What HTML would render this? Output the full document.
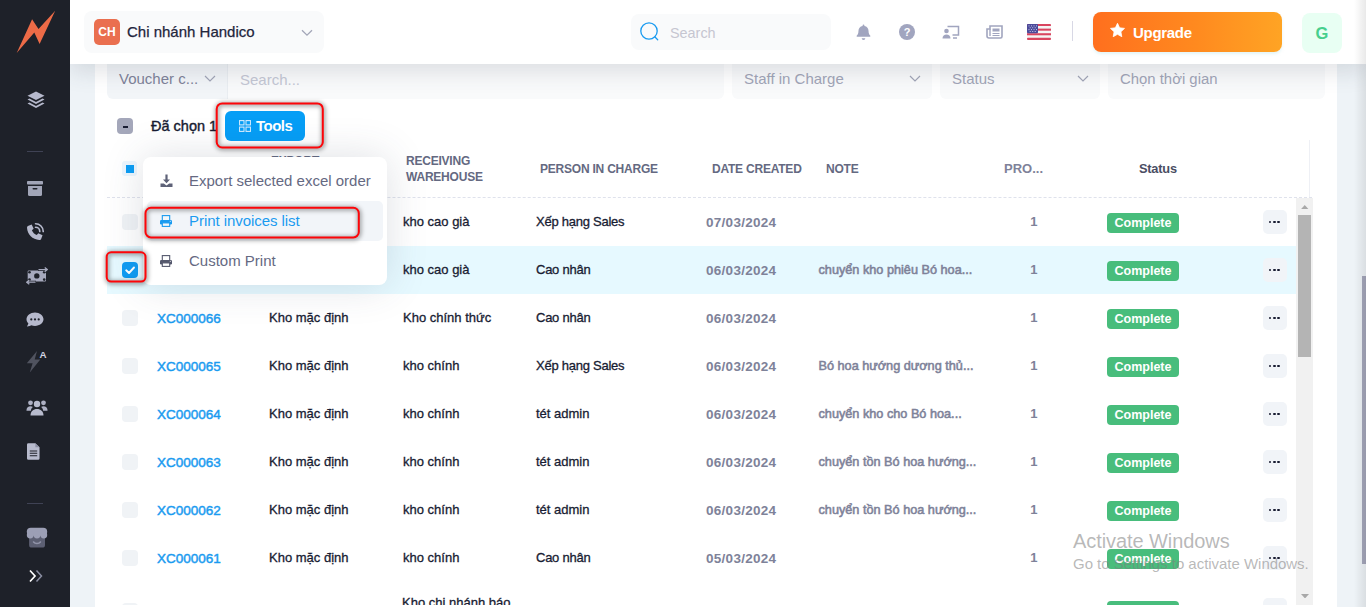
<!DOCTYPE html>
<html lang="vi">
<head>
<meta charset="utf-8">
<title>Export Warehouse</title>
<style>
*{box-sizing:border-box;margin:0;padding:0}
html,body{width:1366px;height:607px;overflow:hidden;background:#eef3f7;font-family:"Liberation Sans",sans-serif;color:#181c32}
.abs{position:absolute}
#side{position:absolute;left:0;top:0;width:70px;height:607px;background:#1e2129;z-index:30}
#side svg{position:absolute}
#side .dv{position:absolute;left:27px;width:16px;height:1px;background:#3f4254}
#hdr{position:absolute;left:70px;top:0;width:1296px;height:64px;background:#fff;box-shadow:0 8px 22px rgba(60,65,85,.15);z-index:20}
#card{position:absolute;left:95px;top:0;width:1242px;height:607px;background:#fff}
.t{position:absolute;white-space:nowrap;line-height:1}

#pg{position:absolute;left:-95px;top:0;width:1366px;height:607px}
.fl{position:absolute;top:54px;height:44.500px;background:#f9fafb;border-radius:0 0 6px 6px}
.ft{position:absolute;white-space:nowrap;line-height:1;font-size:15px;top:71px;color:#a1a5b7}
.th{position:absolute;white-space:nowrap;font-size:12px;font-weight:700;color:#646981;line-height:16px;letter-spacing:-.22px}
.row{position:absolute;left:107px;width:1189px;height:48px}
.row .cb{position:absolute;left:15px;top:16px;width:16px;height:16px;border-radius:4px;background:#f0f3f6}
.row .c{position:absolute;white-space:nowrap;line-height:1;top:17px;font-size:13px}
.row .code{left:50px;color:#1a9bf0;font-weight:500;font-size:13.5px;top:18px;-webkit-text-stroke:.45px #1a9bf0}
.row .k{color:#181c32;font-weight:500;-webkit-text-stroke:.3px #181c32}
.row .g{color:#7e8299;font-weight:700}
.row .n{color:#7e8299;font-weight:400;font-size:12.700px;-webkit-text-stroke:.55px #7e8299;left:711.500px;top:18px}
.row .p{letter-spacing:-.25px}
.row .d{left:599px;font-size:13.500px;top:18px;letter-spacing:.28px}
.row .bd{position:absolute;left:1000px;top:15px;width:72px;height:20px;border-radius:4px;background:#48bd7c;color:#fff;font-size:12.500px;font-weight:700;text-align:center;line-height:20px}
.row .mb{position:absolute;left:1156px;top:12px;width:24px;height:24px;border-radius:5px;background:#f1f4f8}
.row .mb i{position:absolute;top:10.700px;width:2.600px;height:2.600px;border-radius:50%;background:#181c32}
.rb{border:2px solid #fb0a0e;border-radius:5px;z-index:15;box-shadow:1px 1px 5px rgba(0,0,0,.36),inset 1px 1px 5px rgba(0,0,0,.28)}
/* SECTION-CSS */
</style>
</head>
<body>
<div id="card">
<div id="pg">
<div class="fl" style="left:107px;width:121px;background:#f2f5f8;border-radius:0 0 0 6px;border-right:1px solid #e9edf1"></div>
<div class="fl" style="left:228px;width:496px;border-radius:0 0 6px 0"></div>
<div class="fl" style="left:732px;width:200px"></div>
<div class="fl" style="left:940px;width:160px"></div>
<div class="fl" style="left:1108px;width:217px"></div>
<div class="ft" style="left:119px;color:#7e8299">Voucher c...</div>
<svg class="abs" style="left:204px;top:75px" width="12" height="8" viewBox="0 0 12 8"><path d="M1 1 L6 6 L11 1" fill="none" stroke="#a1a5b7" stroke-width="1.200"/></svg>
<div class="ft" style="left:240px;top:72px;color:#c4c7d4">Search...</div>
<div class="ft" style="left:744px">Staff in Charge</div>
<svg class="abs" style="left:909px;top:75px" width="12" height="8" viewBox="0 0 12 8"><path d="M1 1 L6 6 L11 1" fill="none" stroke="#a1a5b7" stroke-width="1.200"/></svg>
<div class="ft" style="left:952px">Status</div>
<svg class="abs" style="left:1077px;top:75px" width="12" height="8" viewBox="0 0 12 8"><path d="M1 1 L6 6 L11 1" fill="none" stroke="#a1a5b7" stroke-width="1.200"/></svg>
<div class="ft" style="left:1120px;top:72px;font-size:14.900px">Chọn thời gian</div>

<div class="abs" style="left:117px;top:118px;width:16px;height:16px;border-radius:4px;background:#a4a7ba"></div><div class="abs" style="left:122.500px;top:126px;width:5px;height:1.500px;background:#181c32"></div>
<div class="t" style="left:151px;top:118.500px;font-size:14.500px;font-weight:500;color:#181c32;-webkit-text-stroke:.4px #181c32">Đã chọn 1</div>
<div class="abs" style="left:225px;top:111px;width:80px;height:30px;border-radius:6px;background:#069ef6"></div>
<svg class="abs" style="left:239px;top:120px" width="12" height="12" viewBox="0 0 13 12" preserveAspectRatio="none"><g fill="none" stroke="#d5ecfd" stroke-width="1.100"><rect x=".6" y=".6" width="4.800" height="4.300"/><rect x="7.600" y=".6" width="4.800" height="4.300"/><rect x=".6" y="7.100" width="4.800" height="4.300"/><rect x="7.600" y="7.100" width="4.800" height="4.300"/></g></svg>
<div class="t" style="left:256px;top:118px;font-size:15px;font-weight:700;color:#fff;letter-spacing:-.5px">Tools</div>

<div class="abs" style="left:122px;top:161px;width:15px;height:15px;border-radius:3px;background:#ecf6fe"></div>
<div class="abs" style="left:126px;top:165px;width:8px;height:8px;background:#0c9df4"></div>
<div class="th" style="left:271px;top:153px">EXPORT<br>WAREHOUSE</div>
<div class="th" style="left:406px;top:152.500px">RECEIVING<br>WAREHOUSE</div>
<div class="th" style="left:540px;top:160.500px">PERSON IN CHARGE</div>
<div class="th" style="left:712px;top:160.500px">DATE CREATED</div>
<div class="th" style="left:826px;top:160.500px">NOTE</div>
<div class="th" style="left:1004px;top:160.500px;font-size:13px;color:#7e8299;font-weight:700;letter-spacing:0">PRO...</div>
<div class="th" style="left:1139px;top:160.500px;color:#4a4d63;font-size:12.800px">Status</div>
<div class="abs" style="left:1308.500px;top:140px;width:1px;height:58px;background:#eef0f5"></div>
<div class="abs" style="left:107px;top:197px;width:1205px;height:0;border-top:1px dashed #dfe2ec"></div>
<div class="row" style="top:198px"><div class="cb"></div><div class="c code">XC000068</div><div class="c k" style="left:162px">Kho mặc định</div><div class="c k" style="left:296px">kho cao già</div><div class="c k p" style="left:429px">Xếp hạng Sales</div><div class="c g d">07/03/2024</div><div class="c g" style="left:923.200px;font-size:13px">1</div><div class="bd">Complete</div><div class="mb"><i style="left:5.800px"></i><i style="left:10px"></i><i style="left:14.200px"></i></div></div>
<div class="row" style="top:246px;background:#e6f9ff"><div class="cb" style="background:#0f9cf3"><svg width="16" height="16" viewBox="0 0 16 16" style="position:absolute;left:0;top:0"><path d="M4.200 8.300 L7 11 L12 5.500" fill="none" stroke="#fff" stroke-width="1.900" stroke-linecap="round" stroke-linejoin="round"/></svg></div><div class="c code">XC000067</div><div class="c k" style="left:162px">Kho mặc định</div><div class="c k" style="left:296px">kho cao già</div><div class="c k p" style="left:429px">Cao nhân</div><div class="c g d">06/03/2024</div><div class="c n">chuyển kho phiêu Bó hoa...</div><div class="c g" style="left:923.200px;font-size:13px">1</div><div class="bd">Complete</div><div class="mb"><i style="left:5.800px"></i><i style="left:10px"></i><i style="left:14.200px"></i></div></div>
<div class="row" style="top:294px"><div class="cb"></div><div class="c code">XC000066</div><div class="c k" style="left:162px">Kho mặc định</div><div class="c k" style="left:296px">Kho chính thức</div><div class="c k p" style="left:429px">Cao nhân</div><div class="c g d">06/03/2024</div><div class="c g" style="left:923.200px;font-size:13px">1</div><div class="bd">Complete</div><div class="mb"><i style="left:5.800px"></i><i style="left:10px"></i><i style="left:14.200px"></i></div></div>
<div class="row" style="top:342px"><div class="cb"></div><div class="c code">XC000065</div><div class="c k" style="left:162px">Kho mặc định</div><div class="c k" style="left:296px">kho chính</div><div class="c k p" style="left:429px">Xếp hạng Sales</div><div class="c g d">06/03/2024</div><div class="c n">Bó hoa hướng dương thủ...</div><div class="c g" style="left:923.200px;font-size:13px">1</div><div class="bd">Complete</div><div class="mb"><i style="left:5.800px"></i><i style="left:10px"></i><i style="left:14.200px"></i></div></div>
<div class="row" style="top:390px"><div class="cb"></div><div class="c code">XC000064</div><div class="c k" style="left:162px">Kho mặc định</div><div class="c k" style="left:296px">kho chính</div><div class="c k" style="left:429px">tét admin</div><div class="c g d">06/03/2024</div><div class="c n">chuyển kho cho Bó hoa...</div><div class="c g" style="left:923.200px;font-size:13px">1</div><div class="bd">Complete</div><div class="mb"><i style="left:5.800px"></i><i style="left:10px"></i><i style="left:14.200px"></i></div></div>
<div class="row" style="top:438px"><div class="cb"></div><div class="c code">XC000063</div><div class="c k" style="left:162px">Kho mặc định</div><div class="c k" style="left:296px">kho chính</div><div class="c k" style="left:429px">tét admin</div><div class="c g d">06/03/2024</div><div class="c n">chuyển tồn Bó hoa hướng...</div><div class="c g" style="left:923.200px;font-size:13px">1</div><div class="bd">Complete</div><div class="mb"><i style="left:5.800px"></i><i style="left:10px"></i><i style="left:14.200px"></i></div></div>
<div class="row" style="top:486px"><div class="cb"></div><div class="c code">XC000062</div><div class="c k" style="left:162px">Kho mặc định</div><div class="c k" style="left:296px">kho chính</div><div class="c k" style="left:429px">tét admin</div><div class="c g d">06/03/2024</div><div class="c n">chuyển tồn Bó hoa hướng...</div><div class="c g" style="left:923.200px;font-size:13px">1</div><div class="bd">Complete</div><div class="mb"><i style="left:5.800px"></i><i style="left:10px"></i><i style="left:14.200px"></i></div></div>
<div class="row" style="top:534px"><div class="cb"></div><div class="c code">XC000061</div><div class="c k" style="left:162px">Kho mặc định</div><div class="c k" style="left:296px">kho chính</div><div class="c k p" style="left:429px">Cao nhân</div><div class="c g d">05/03/2024</div><div class="c g" style="left:923.200px;font-size:13px">1</div><div class="bd">Complete</div><div class="mb"><i style="left:5.800px"></i><i style="left:10px"></i><i style="left:14.200px"></i></div></div>
<div class="row" style="top:582px"><div class="cb" style="top:21px"></div><div class="c k" style="left:295px;top:13.700px">Kho chi nhánh báo</div><div class="bd" style="top:19px">Complete</div><div class="mb" style="top:16px"></div></div>

<div class="abs" style="left:95px;top:605px;width:1242px;height:2px;background:#fff"></div>
<!-- scrollbar -->
<div class="abs" style="left:1296px;top:198px;width:17px;height:407px;background:#f1f1f1"></div>
<div class="abs" style="left:1298px;top:215px;width:13px;height:142px;background:#b4b4b4"></div>
<svg class="abs" style="left:1301px;top:205px" width="7.500" height="4" viewBox="0 0 9 5"><path d="M0 5 L4.500 0 L9 5Z" fill="#a8a8a8"/></svg>
<svg class="abs" style="left:1300.500px;top:593.500px" width="8" height="4.500" viewBox="0 0 9 5"><path d="M0 0 L4.500 5 L9 0Z" fill="#a8a8a8"/></svg>
</div>

</div>
<div id="hdr">

<div class="abs" style="left:14px;top:11px;width:240px;height:42px;background:#f9fafb;border-radius:8px"></div>
<div class="abs" style="left:24px;top:19px;width:26px;height:26px;background:#ea6f4f;border-radius:5px;color:#fff;font-weight:700;font-size:12px;line-height:26px;text-align:center">CH</div>
<div class="t" id="brn" style="left:57px;top:24px;font-size:15px;font-weight:500;color:#22253c;-webkit-text-stroke:.25px #22253c">Chi nhánh Handico</div>
<svg class="abs" style="left:231px;top:28.500px" width="12" height="8" viewBox="0 0 12 8"><path d="M1 1.2 L6 6.2 L11 1.2" fill="none" stroke="#a3a6b8" stroke-width="1.300"/></svg>
<div class="abs" style="left:560.500px;top:14px;width:200.500px;height:36px;background:#f9fafb;border-radius:8px"></div>
<svg class="abs" style="left:568.700px;top:19.700px" width="22" height="22" viewBox="0 0 22 22"><circle cx="10" cy="11" r="8.200" fill="none" stroke="#1a9bf0" stroke-width="1.300"/><path d="M16 17 L18.700 19.700" stroke="#1a9bf0" stroke-width="1.300" stroke-linecap="round"/></svg>
<div class="t" style="left:600px;top:26px;font-size:14.400px;color:#c6c6d1">Search</div>
<!-- bell -->
<svg class="abs" style="left:785.500px;top:24px" width="15" height="16.500" viewBox="0 0 16 18"><path d="M8 0.5c-.6 0-1 .4-1 1v.6C4.2 2.6 2.5 4.8 2.5 7.5c0 3-1 4.2-1.8 5-.5.6-.1 1.5.7 1.5h13.2c.8 0 1.2-.9.7-1.5-.8-.8-1.8-2-1.8-5 0-2.700-1.7-4.900-4.500-5.400V1.500c0-.6-.4-1-1-1z" fill="#a1a5bf"/><path d="M6 15.500a2 2 0 0 0 4 0z" fill="#a1a5bf"/></svg>
<!-- help -->
<svg class="abs" style="left:829px;top:24px" width="16" height="16" viewBox="0 0 16 16"><circle cx="8" cy="8" r="8" fill="#a1a5bf"/><text x="8" y="12" text-anchor="middle" font-family="Liberation Sans, sans-serif" font-weight="700" font-size="11" fill="#fff">?</text></svg>
<!-- person screen -->
<svg class="abs" style="left:872px;top:25px" width="18" height="14" viewBox="0 0 18 14"><path d="M5.500 1.500h11v8.500h-6" fill="none" stroke="#a1a5bf" stroke-width="1.500"/><circle cx="4.500" cy="6" r="2.300" fill="#a1a5bf"/><path d="M0.500 13.500c0-2.800 1.800-4 4-4s4 1.200 4 4z" fill="#a1a5bf"/><path d="M11 13h4" stroke="#a1a5bf" stroke-width="1.500"/></svg>
<!-- newspaper -->
<svg class="abs" style="left:916px;top:25px" width="17" height="14" viewBox="0 0 17 14"><path d="M4 1h12v10.500a1.500 1.500 0 0 1-1.500 1.500H3a2 2 0 0 1-2-2V4h3z" fill="none" stroke="#a1a5bf" stroke-width="1.600"/><path d="M4 4v7" stroke="#a1a5bf" stroke-width="1.400"/><rect x="6.500" y="3.500" width="7" height="3" fill="#a1a5bf"/><path d="M6.500 8.500h7M6.500 10.500h7" stroke="#a1a5bf" stroke-width="1.200"/></svg>
<!-- flag -->
<svg class="abs" style="left:957px;top:23.500px" width="24" height="16" viewBox="0 0 24 17" preserveAspectRatio="none"><rect width="24" height="17" rx="1.500" fill="#f5f5f5"/><g fill="#d9455f"><rect y="0" width="24" height="2.200" rx="1"/><rect y="4.900" width="24" height="2.200"/><rect y="9.800" width="24" height="2.200"/><rect y="14.700" width="24" height="2.300" rx="1"/></g><rect width="11" height="9.800" fill="#4b4a9a" rx="1"/><g fill="#cfd0ee"><rect x="1.500" y="1.500" width="1" height="1"/><rect x="4" y="1.500" width="1" height="1"/><rect x="6.500" y="1.500" width="1" height="1"/><rect x="9" y="1.500" width="1" height="1"/><rect x="2.700" y="3.500" width="1" height="1"/><rect x="5.200" y="3.500" width="1" height="1"/><rect x="7.700" y="3.500" width="1" height="1"/><rect x="1.500" y="5.500" width="1" height="1"/><rect x="4" y="5.500" width="1" height="1"/><rect x="6.500" y="5.500" width="1" height="1"/><rect x="9" y="5.500" width="1" height="1"/><rect x="2.700" y="7.500" width="1" height="1"/><rect x="5.200" y="7.500" width="1" height="1"/><rect x="7.700" y="7.500" width="1" height="1"/></g></svg>
<div class="abs" style="left:1002px;top:21px;width:1px;height:20px;background:#d8d8e5"></div>
<div class="abs" style="left:1023px;top:12px;width:189px;height:40px;border-radius:8px;background:linear-gradient(90deg,#ff6f1e 0%,#ff8a1f 55%,#ffa424 100%);box-shadow:0 2px 3px rgba(200,235,240,.5)"></div>
<svg class="abs" style="left:1039.500px;top:22.500px" width="15" height="14" viewBox="0 0 15 14"><path d="M7.500 0.300l2.100 4.500 4.900.6-3.600 3.400.9 4.900-4.300-2.400-4.300 2.400.9-4.900L.5 5.400l4.900-.6z" fill="#fff" stroke="#fff" stroke-width=".8" stroke-linejoin="round"/></svg>
<div class="t" style="left:1063px;top:25px;font-size:15px;font-weight:700;color:#fff;letter-spacing:-.3px">Upgrade</div>
<div class="abs" style="left:1232px;top:13px;width:40px;height:40px;border-radius:8px;background:#e8fff3;color:#47cf8d;font-size:16.500px;font-weight:700;text-align:center;line-height:41px">G</div>

</div>
<div id="side">

<!-- logo -->
<svg style="left:15px;top:8px" width="42" height="48" viewBox="0 0 42 48"><path d="M40.200 2.700 L23.500 20.900 L17.100 11.300 L1.700 45.100 L19.300 24.500 L24.600 35.900 Z" fill="#ed6b47"/></svg>
<!-- layers -->
<svg style="left:27px;top:91px" width="18" height="18" viewBox="0 0 18 18"><path d="M9 0.500 L17.500 4.700 L9 9 L0.500 4.700Z" fill="#b6b9cc"/><path d="M2.400 7.600 L0.500 8.600 L9 13 L17.500 8.600 L15.600 7.600 L9 10.900Z" fill="#b6b9cc"/><path d="M2.400 11.600 L0.500 12.600 L9 17 L17.500 12.600 L15.600 11.600 L9 14.900Z" fill="#b6b9cc"/></svg>
<div class="dv" style="top:151px"></div>
<!-- archive -->
<svg style="left:27px;top:180.500px" width="16" height="15" viewBox="0 0 16 15"><rect x="0" y="0" width="16" height="3.500" rx=".8" fill="#a1a5b7"/><path d="M1 5h14v8.500a1.500 1.500 0 0 1-1.500 1.500h-11A1.500 1.500 0 0 1 1 13.500z" fill="#a1a5b7"/><rect x="5.500" y="7" width="5" height="1.600" rx=".8" fill="#1e2129"/></svg>
<!-- phone volume -->
<svg style="left:25px;top:221.500px" width="20" height="20" viewBox="0 0 18 18"><path d="M3.200 3.300 L6 2.200 L7.800 6 L6.200 7.400 C7 9.400 8.600 11 10.600 11.800 L12 10.200 L15.800 12 L14.700 14.800 C14.500 15.700 13.700 16.200 12.800 16.200 C6.800 15.800 2.200 11.200 1.800 5.200 C1.800 4.300 2.300 3.500 3.200 3.300Z" fill="#b6b9cc"/><path d="M9.500 4.700a3.800 3.800 0 0 1 3.800 3.800" fill="none" stroke="#b6b9cc" stroke-width="1.500" stroke-linecap="round"/><path d="M9.500 1.600a6.900 6.900 0 0 1 6.900 6.900" fill="none" stroke="#b6b9cc" stroke-width="1.500" stroke-linecap="round"/></svg>
<!-- money -->
<svg style="left:26px;top:267px" width="22" height="18" viewBox="0 0 22 18"><rect x="1.700" y="3.400" width="18.300" height="11" rx="1" fill="#a6a9bd"/><circle cx="10.800" cy="8.900" r="2.700" fill="#1e2129"/><circle cx="3.500" cy="5.200" r="1.300" fill="#1e2129"/><circle cx="18.200" cy="5.200" r="1.300" fill="#1e2129"/><circle cx="3.500" cy="12.600" r="1.300" fill="#1e2129"/><circle cx="18.200" cy="12.600" r="1.300" fill="#1e2129"/><path d="M12 2.600h9.200M18.700 0.500l2.600 2.100-2.600 2.100" fill="none" stroke="#1e2129" stroke-width="3"/><path d="M12.500 2.600h8.500M18.700 0.500l2.600 2.100-2.600 2.100" fill="none" stroke="#a6a9bd" stroke-width="1.300"/><path d="M10 15.200H0.800M3.300 13.100l-2.600 2.100 2.600 2.100" fill="none" stroke="#1e2129" stroke-width="3"/><path d="M9.500 15.200H1M3.300 13.100l-2.600 2.100 2.600 2.100" fill="none" stroke="#a6a9bd" stroke-width="1.300"/></svg>
<!-- chat -->
<svg style="left:26px;top:312px" width="18" height="17" viewBox="0 0 18 17"><path d="M9 0.500C4.300 0.500 0.500 3.500 0.500 7.300c0 1.600.7 3.100 1.900 4.300-.4 1.500-1.500 2.900-1.500 2.900 0 0 2.500-.1 4.400-1.300 1.100.4 2.400.7 3.700.7 4.700 0 8.500-3 8.500-6.600S13.700.500 9 .500z" fill="#b6b9cc"/><circle cx="5.300" cy="7.400" r="1.100" fill="#1e2129"/><circle cx="9" cy="7.400" r="1.100" fill="#1e2129"/><circle cx="12.700" cy="7.400" r="1.100" fill="#1e2129"/></svg>
<!-- bolt A -->
<svg style="left:25px;top:349px" width="24" height="24" viewBox="0 0 24 24"><path d="M12 2 L1.800 14.300 L7.600 14.300 L4.800 23.500 L15.300 10.600 L9.700 10.600Z" fill="#50535f"/><text x="18" y="9.300" text-anchor="middle" font-family="Liberation Sans, sans-serif" font-weight="700" font-size="9.800" fill="#d3d5e2">A</text></svg>
<!-- users -->
<svg style="left:26px;top:399px" width="22" height="17" viewBox="0 0 22 17"><circle cx="4.500" cy="3.800" r="2.400" fill="#adb0c3"/><circle cx="17.500" cy="3.800" r="2.400" fill="#adb0c3"/><circle cx="11" cy="5" r="3.200" fill="#b8bbcd"/><path d="M0.500 11c0-2.500 1.800-3.800 4-3.800 1 0 1.800.3 2.400.7-1.300 1-2 2.300-2 3.900H0.500zM21.500 11c0-2.500-1.800-3.800-4-3.800-1 0-1.800.3-2.400.7 1.300 1 2 2.300 2 3.900h4.400z" fill="#adb0c3"/><path d="M4.500 16.500c0-4.300 2.900-6.500 6.500-6.500s6.500 2.200 6.500 6.500z" fill="#b8bbcd"/></svg>
<!-- doc -->
<svg style="left:27px;top:443px" width="13" height="17" viewBox="0 0 14 18"><path d="M1.500 0h7.500l4.500 4.500V16.500A1.500 1.500 0 0 1 12 18H1.500A1.500 1.500 0 0 1 0 16.500v-15A1.500 1.500 0 0 1 1.500 0z" fill="#b8bbcd"/><path d="M9 0v4.500h4.500" fill="#8b8fa3"/><path d="M3 8.500h8M3 11h8M3 13.500h8" stroke="#1e2129" stroke-width="1.100"/></svg>
<div class="dv" style="top:503px"></div>
<!-- shop -->
<svg style="left:26px;top:527px" width="22" height="21" viewBox="0 0 22 21"><rect x="3.100" y="8" width="15.900" height="12.600" rx="2.600" fill="#5c5f72"/><rect x="0.800" y="0.700" width="20.400" height="8" rx="4" fill="#9c9fb5"/><circle cx="4.200" cy="8" r="3.400" fill="#9c9fb5"/><circle cx="11" cy="8" r="3.400" fill="#9c9fb5"/><circle cx="17.800" cy="8" r="3.400" fill="#9c9fb5"/><path d="M7.600 15 c1.500 2 5.300 2 6.800 0" fill="none" stroke="#9093a8" stroke-width="1.600" stroke-linecap="round"/></svg>
<!-- chevrons -->
<svg style="left:27.500px;top:569px" width="16" height="14" viewBox="0 0 16 14"><path d="M2 1.500 L7 7 L2 12.500" fill="none" stroke="#ffffff" stroke-width="1.700"/><path d="M8.500 1.500 L13.500 7 L8.500 12.500" fill="none" stroke="#8b8fa3" stroke-width="1.500"/></svg>

</div>

<div class="abs" style="left:143px;top:157px;width:244px;height:128px;background:#fff;border-radius:8px;box-shadow:0 0 40px rgba(60,70,95,.17);z-index:10"></div>
<div class="abs" style="left:147px;top:201px;width:236px;height:40px;background:#f2f5f9;border-radius:5px;z-index:11"></div>
<!-- download icon -->
<svg class="abs" style="left:160px;top:174px;z-index:12" width="13" height="14" viewBox="0 0 13 14"><path d="M5.400 0.500h2.200v5h2.400L6.500 9.300 3 5.500h2.400z" fill="#5e6278"/><path d="M0.500 9.500h3.300l2.700 2 2.700-2h3.300v3.500h-12z" fill="#5e6278"/></svg>
<div class="t" style="left:189px;top:173px;font-size:15px;color:#656982;z-index:12">Export selected excel order</div>
<svg class="abs" style="left:160.300px;top:215px;z-index:12" width="12" height="12" viewBox="0 0 12 12"><rect x="2.300" y=".6" width="7.400" height="5" fill="#f4f7fa" stroke="#1a9bf0" stroke-width="1.100"/><rect x="0" y="4.900" width="12" height="4.600" rx="1.300" fill="#1a9bf0"/><rect x="2.300" y="7.900" width="7.400" height="3.500" fill="#f4f7fa" stroke="#1a9bf0" stroke-width="1.100"/><circle cx="10.300" cy="6.300" r=".55" fill="#f4f7fa"/></svg>
<div class="t" style="left:189px;top:213px;font-size:15px;color:#1a9bf0;letter-spacing:-.06px;z-index:12">Print invoices list</div>
<svg class="abs" style="left:160.300px;top:255px;z-index:12" width="12" height="12" viewBox="0 0 12 12"><rect x="2.300" y=".6" width="7.400" height="5" fill="#fff" stroke="#54586d" stroke-width="1.100"/><rect x="0" y="4.900" width="12" height="4.600" rx="1.300" fill="#54586d"/><rect x="2.300" y="7.900" width="7.400" height="3.500" fill="#fff" stroke="#54586d" stroke-width="1.100"/><circle cx="10.300" cy="6.300" r=".55" fill="#fff"/></svg>
<div class="t" style="left:189px;top:253px;font-size:15px;color:#656982;z-index:12">Custom Print</div>
<!-- red annotation boxes -->
<svg class="abs" style="left:0;top:0;z-index:15" width="1366" height="607" viewBox="0 0 1366 607">
<defs><filter id="bl" x="-20%" y="-30%" width="140%" height="160%"><feGaussianBlur stdDeviation="2.300"/></filter></defs>
<g fill="none" stroke="#000" stroke-opacity=".34" stroke-width="4.500" filter="url(#bl)" transform="translate(.5,.8)">
<rect x="216.700" y="103.400" width="106.100" height="44.100" rx="5.500"/>
<rect x="145.500" y="207.800" width="213.300" height="29.600" rx="5.500"/>
<rect x="106.700" y="252.300" width="38.800" height="29.300" rx="4.500"/>
</g>
<g fill="none" stroke="#fd0509" stroke-width="2">
<rect x="216.700" y="103.400" width="106.100" height="44.100" rx="5.500"/>
<rect x="145.500" y="207.800" width="213.300" height="29.600" rx="5.500"/>
<rect x="106.700" y="252.300" width="38.800" height="29.300" rx="4.500"/>
</g>
</svg>
<div class="abs" style="left:1362px;top:276px;width:4px;height:288px;background:#a5a7bb;z-index:5"></div>
<div class="abs" style="left:1354px;top:0;width:12px;height:607px;background:linear-gradient(90deg,rgba(0,0,0,0),rgba(0,0,0,.085));z-index:35"></div>
<!-- windows watermark -->
<div class="t" style="left:1073px;top:530.500px;font-size:20px;color:rgba(125,125,125,.55);z-index:40;letter-spacing:-.08px" id="wm1">Activate Windows</div>
<div class="t" style="left:1073px;top:555.500px;font-size:15px;color:rgba(125,125,125,.55);z-index:40;letter-spacing:-.03px" id="wm2">Go to Settings to activate Windows.</div>

</body>
</html>
